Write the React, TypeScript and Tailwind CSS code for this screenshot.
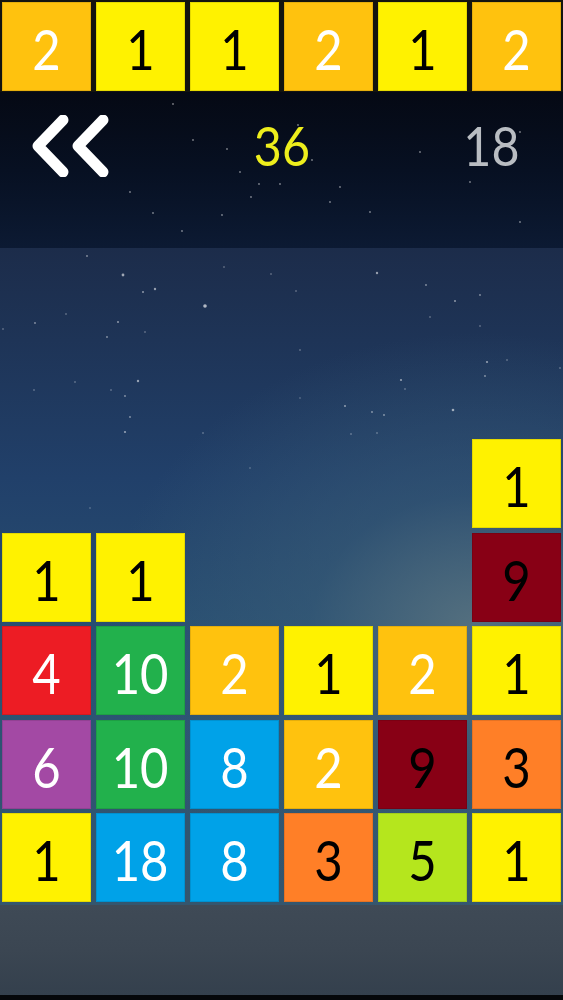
import React from 'react';

// palette used by the tiles, keyed by value
const COLORS: Record<number, { bg: string; fg: string }> = {
  1: { bg: 'bg-[#fff200]', fg: 'text-black' },
  2: { bg: 'bg-[#ffc20e]', fg: 'text-white' },
  3: { bg: 'bg-[#ff7f27]', fg: 'text-black' },
  4: { bg: 'bg-[#ed1c24]', fg: 'text-white' },
  5: { bg: 'bg-[#b5e61d]', fg: 'text-black' },
  6: { bg: 'bg-[#a349a4]', fg: 'text-white' },
  8: { bg: 'bg-[#00a2e8]', fg: 'text-white' },
  9: { bg: 'bg-[#880015]', fg: 'text-black' },
  10: { bg: 'bg-[#22b14c]', fg: 'text-white' },
  18: { bg: 'bg-[#00a2e8]', fg: 'text-white' },
};

const NEXT = [2, 1, 1, 2, 1, 2];

const BOARD: (number | null)[][] = [
  [null, null, null, null, null, 1],
  [1, 1, null, null, null, 9],
  [4, 10, 2, 1, 2, 1],
  [6, 10, 8, 2, 9, 3],
  [1, 18, 8, 3, 5, 1],
];

function Cell({ n }: { n: number | null }) {
  if (n === null) return <div className="h-[89px]" />;
  const c = COLORS[n];
  return (
    <div
      className={`h-[89px] flex items-center justify-center border border-black/10 ${c.bg} ${c.fg}`}
    >
      <span className="inline-block scale-x-[0.86] text-[57px] leading-none pt-[4px]">
        {n}
      </span>
    </div>
  );
}

function Stars({ dots }: { dots: [number, number, number][] }) {
  return (
    <svg className="absolute inset-0 w-full h-full" preserveAspectRatio="none">
      {dots.map(([x, y, r], i) => (
        <circle key={i} cx={x} cy={y} r={r} fill="#ffffff" opacity={0.3 + r * 0.2} />
      ))}
    </svg>
  );
}

const headerStars: [number, number, number][] = [
  [173, 12], [193, 48], [227, 57], [280, 92], [298, 33], [240, 80], [130, 100],
  [182, 139], [153, 121], [251, 105], [259, 92], [222, 123], [312, 68], [340, 95],
  [420, 60], [470, 90], [520, 40], [520, 130], [370, 120], [330, 110],
].map(([x, y]) => [x, y, 0.9] as [number, number, number]);

const skyStars: [number, number, number][] = [
  [123, 27, 1.4], [205, 58, 1.8], [155, 41, 1.2], [143, 44, 1], [87, 8, 0.9],
  [35, 75, 0.9], [118, 74, 1], [145, 84, 0.8], [107, 89, 0.9], [138, 133, 1.2],
  [111, 142, 0.8], [125, 148, 0.9], [130, 169, 0.9], [125, 184, 1.1], [75, 134, 0.8],
  [377, 25, 1.2], [426, 37, 0.9], [455, 53, 1], [480, 47, 0.9], [430, 69, 0.8],
  [296, 43, 0.8], [271, 26, 0.8], [224, 19, 0.8], [401, 132, 1.1], [405, 141, 0.8],
  [345, 158, 1], [372, 164, 0.9], [384, 167, 0.9], [453, 162, 1.3], [480, 78, 0.8],
  [487, 114, 1.1], [485, 128, 0.9], [507, 112, 0.8], [351, 186, 0.8], [377, 185, 0.8],
  [300, 102, 0.8], [203, 185, 0.8], [34, 142, 0.8], [66, 66, 0.8], [3, 81, 0.8],
  [560, 120, 0.8], [300, 150, 0.7], [250, 220, 0.7], [90, 260, 0.7],
];

// double chevron "back" button
function Back() {
  return (
    <svg width="82" height="62" viewBox="0 0 82 62" fill="none">
      <path
        d="M33 5 L8 31 L33 57 M73 5 L48 31 L73 57"
        stroke="#ffffff"
        strokeWidth="11"
        strokeLinecap="round"
        strokeLinejoin="round"
      />
    </svg>
  );
}

export default function App() {
  return (
    <div className="w-[563px] h-[1000px] flex flex-col overflow-hidden bg-black font-['Lato',sans-serif]">
      {/* upcoming row */}
      <div className="h-[92px] bg-[#14140f] grid grid-cols-6 gap-[5px] px-[2px] pt-[2px] pb-[1px]">
        {NEXT.map((n, i) => {
          const c = COLORS[n];
          return (
            <div
              key={i}
              className={`flex items-center justify-center border border-black/10 ${c.bg} ${c.fg}`}
            >
              <span className="inline-block scale-x-[0.86] text-[57px] leading-none pt-[4px]">
                {n}
              </span>
            </div>
          );
        })}
      </div>

      {/* score header */}
      <div className="relative h-[156px] bg-gradient-to-b from-[#050914] via-[#071022] to-[#0c1a33]">
        <Stars dots={headerStars} />
        <div className="relative h-[106px] grid grid-cols-[1fr_auto_1fr] items-center">
          <div className="justify-self-start pl-[30px] pt-[2px]">
            <Back />
          </div>
          <span className="inline-block scale-x-[0.88] text-[55px] leading-none text-[#eeee1c]">
            36
          </span>
          <span className="justify-self-end pr-[42px] inline-block scale-x-[0.88] text-[55px] leading-none text-[#b9bdc2]">
            18
          </span>
        </div>
      </div>

      {/* board */}
      <div className="relative flex-1 flex flex-col justify-end pb-[3px] px-[2px] bg-[radial-gradient(ellipse_at_85%_58%,#55707f_0%,rgba(60,95,120,0.5)_25%,rgba(40,80,110,0)_55%),linear-gradient(to_bottom,#1c2c4a_0%,#21406a_35%,#2a5374_65%,#34566e_100%)]">
        <Stars dots={skyStars} />
        <div className="relative grid grid-cols-6 gap-x-[5px] gap-y-[4.5px]">
          {BOARD.flat().map((n, i) => (
            <Cell key={i} n={n} />
          ))}
        </div>
      </div>

      {/* floor */}
      <div className="h-[90px] bg-gradient-to-b from-[#3f4a56] via-[#3b4652] to-[#34404d]" />
      <div className="h-[5px] bg-[#05070a]" />
    </div>
  );
}
